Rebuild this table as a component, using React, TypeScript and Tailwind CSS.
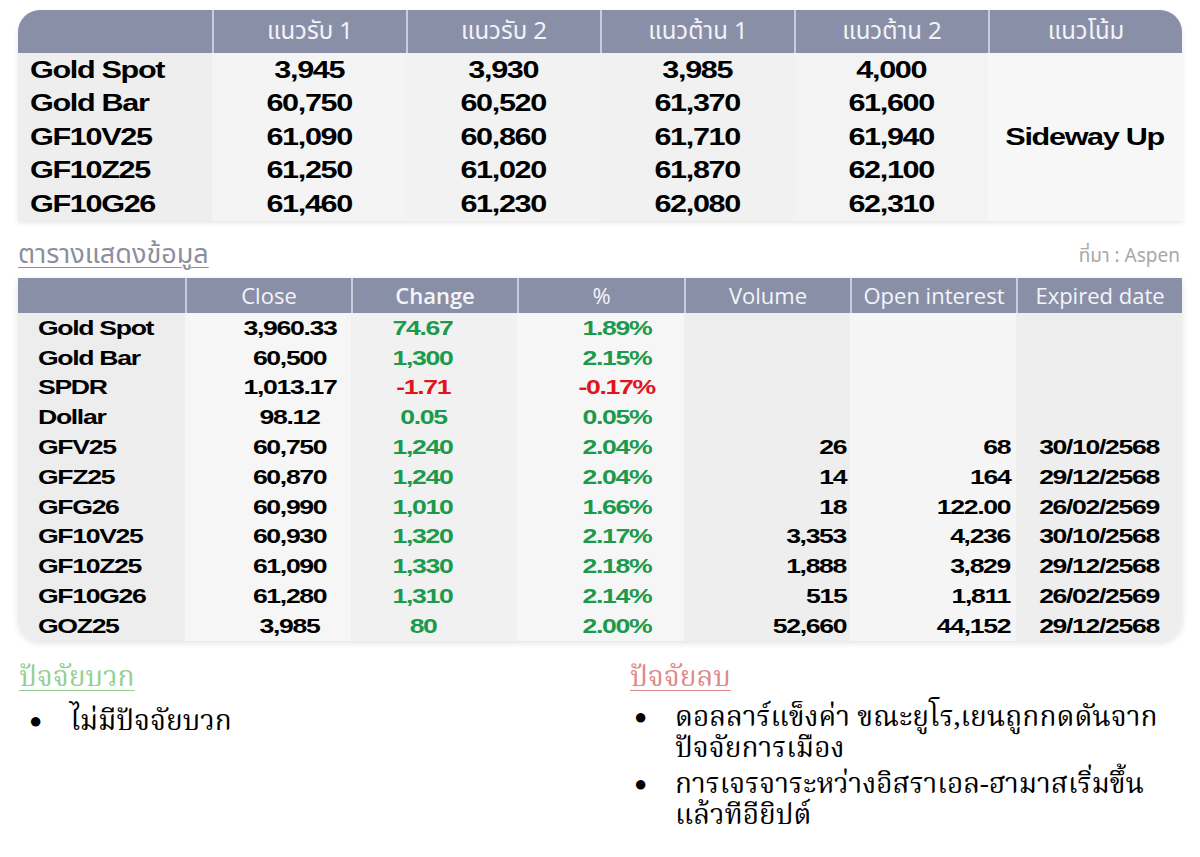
import React from "react";

const topRows: string[][] = [
  ["Gold Spot", "3,945", "3,930", "3,985", "4,000"],
  ["Gold Bar", "60,750", "60,520", "61,370", "61,600"],
  ["GF10V25", "61,090", "60,860", "61,710", "61,940"],
  ["GF10Z25", "61,250", "61,020", "61,870", "62,100"],
  ["GF10G26", "61,460", "61,230", "62,080", "62,310"],
];

type Row = { n: string; c: string; ch: string; p: string; v: string; oi: string; d: string; down?: boolean };

const rows: Row[] = [
  { n: "Gold Spot", c: "3,960.33", ch: "74.67", p: "1.89%", v: "", oi: "", d: "" },
  { n: "Gold Bar", c: "60,500", ch: "1,300", p: "2.15%", v: "", oi: "", d: "" },
  { n: "SPDR", c: "1,013.17", ch: "-1.71", p: "-0.17%", v: "", oi: "", d: "", down: true },
  { n: "Dollar", c: "98.12", ch: "0.05", p: "0.05%", v: "", oi: "", d: "" },
  { n: "GFV25", c: "60,750", ch: "1,240", p: "2.04%", v: "26", oi: "68", d: "30/10/2568" },
  { n: "GFZ25", c: "60,870", ch: "1,240", p: "2.04%", v: "14", oi: "164", d: "29/12/2568" },
  { n: "GFG26", c: "60,990", ch: "1,010", p: "1.66%", v: "18", oi: "122.00", d: "26/02/2569" },
  { n: "GF10V25", c: "60,930", ch: "1,320", p: "2.17%", v: "3,353", oi: "4,236", d: "30/10/2568" },
  { n: "GF10Z25", c: "61,090", ch: "1,330", p: "2.18%", v: "1,888", oi: "3,829", d: "29/12/2568" },
  { n: "GF10G26", c: "61,280", ch: "1,310", p: "2.14%", v: "515", oi: "1,811", d: "26/02/2569" },
  { n: "GOZ25", c: "3,985", ch: "80", p: "2.00%", v: "52,660", oi: "44,152", d: "29/12/2568" },
];

const thai = "font-['Tahoma','Noto_Sans_Thai','Noto_Serif_Thai','Garuda','Loma','Norasi',sans-serif]";
const thaiSerif = "font-['Noto_Serif_Thai','Norasi','Tlwg_Typo','Noto_Sans_Thai','Garuda',serif]";

function SqL({ t }: { t: string }) {
  return <span className="inline-block origin-left scale-x-[1.33] tracking-[-1px] whitespace-nowrap">{t}</span>;
}
function SqC({ t }: { t: string }) {
  return <span className="inline-block origin-center scale-x-[1.33] tracking-[-1px] whitespace-nowrap">{t}</span>;
}
function SqR({ t }: { t: string }) {
  return <span className="inline-block origin-right scale-x-[1.33] tracking-[-1px] whitespace-nowrap">{t}</span>;
}

const topBg = ["bg-[#eeeeee]", "bg-[#f4f4f4]", "bg-[#f2f2f2]", "bg-[#f1f1f1]", "bg-[#f3f3f3]"];

export default function App() {
  return (
    <div className="w-[1200px] h-[857px] bg-white overflow-hidden text-black">
      <div className="pl-[18px] pt-[10px] w-[1182px]">
        {/* Top table */}
        <div className="grid grid-cols-[repeat(6,194px)] grid-rows-[43px_repeat(5,33.6px)] rounded-t-[22px] overflow-hidden shadow-[0_2px_5px_rgba(0,0,0,0.10)] font-['Liberation_Sans',Arial,sans-serif] font-bold text-[23px]">
          <div className="bg-[#8a8fa8]" />
          {["แนวรับ 1", "แนวรับ 2", "แนวต้าน 1", "แนวต้าน 2", "แนวโน้ม"].map((h) => (
            <div key={h} className={`bg-[#8a8fa8] border-l-2 border-[#c9ccda] flex items-center justify-center text-[24px] font-normal text-[#f2f3f8] ${thai}`}>
              {h}
            </div>
          ))}
          {topRows.map((r, ri) => (
            <React.Fragment key={ri}>
              <div className={`${topBg[0]} flex items-center pl-[12px]`}>
                <SqL t={r[0]} />
              </div>
              {r.slice(1).map((v, ci) => (
                <div key={ci} className={`${topBg[ci + 1]} flex items-center justify-center`}>
                  <SqC t={v} />
                </div>
              ))}
              {ri === 0 && (
                <div className="row-span-5 bg-[#f7f7f7] flex items-center justify-center">
                  <SqC t="Sideway Up" />
                </div>
              )}
            </React.Fragment>
          ))}
        </div>

        {/* Title */}
        <div className="flex justify-between items-end h-[57px] pb-[6px]">
          <div className={`text-[27px] leading-[34px] text-[#8d8f9e] underline underline-offset-[4px] decoration-[1px] ${thai}`}>
            ตารางแสดงข้อมูล
          </div>
          <div className={`text-[19px] text-[#a8a8a8] pr-[2px] pb-[0px] ${thai}`}>ที่มา : Aspen</div>
        </div>

        {/* Second table */}
        <div className="grid grid-cols-[167px_166px_166px_167px_166px_166px_166px] grid-rows-[35px_repeat(11,29.8px)] rounded-b-[22px] overflow-hidden shadow-[0_2px_6px_rgba(0,0,0,0.12)] font-['Liberation_Sans',Arial,sans-serif] font-bold text-[20px]">
          <div className="bg-[#8a8fa8]" />
          {[
            { t: "Close", b: false },
            { t: "Change", b: true },
            { t: "%", b: false },
            { t: "Volume", b: false },
            { t: "Open interest", b: false },
            { t: "Expired date", b: false },
          ].map((h) => (
            <div
              key={h.t}
              className={`bg-[#8a8fa8] border-l-2 border-[#c9ccda] flex items-center justify-center whitespace-nowrap text-[22px] text-[#f4f5fa] font-['Open_Sans','Noto_Sans',sans-serif] ${h.b ? "font-semibold" : "font-normal"}`}
            >
              {h.t}
            </div>
          ))}
          {rows.map((r, i) => (
            <React.Fragment key={i}>
              <div className="bg-[#ededed] flex items-center pl-[20px]">
                <SqL t={r.n} />
              </div>
              <div className="bg-[#f6f6f6] flex items-center justify-center pl-[44px]">
                <SqC t={r.c} />
              </div>
              <div className={`bg-[#f1f1f1] flex items-center justify-center pr-[22px] ${r.down ? "text-[#e3131b]" : "text-[#1c9a4c]"}`}>
                <SqC t={r.ch} />
              </div>
              <div className={`bg-[#f6f6f6] flex items-center justify-center pl-[32px] ${r.down ? "text-[#e3131b]" : "text-[#1c9a4c]"}`}>
                <SqC t={r.p} />
              </div>
              <div className="bg-[#eeeeee] flex items-center justify-end pr-[4px]">
                <SqR t={r.v} />
              </div>
              <div className="bg-[#f5f5f5] flex items-center justify-end pr-[6px]">
                <SqR t={r.oi} />
              </div>
              <div className="bg-[#eeeeee] flex items-center justify-center">
                <SqC t={r.d} />
              </div>
            </React.Fragment>
          ))}
        </div>
      </div>

      {/* Factors */}
      <div className={`grid grid-cols-[611px_1fr] pl-[19px] pt-[20px] ${thaiSerif}`}>
        <div>
          <div className="text-[28px] leading-[36px] text-[#93cf93] underline underline-offset-[4px] decoration-[1px] inline-block">
            ปัจจัยบวก
          </div>
          <ul className="mt-[10px] text-[28px] leading-[31px]">
            <li className="flex items-start">
              <span className="w-[51px] pl-[10px] text-[22px] leading-[31px]">●</span>
              <span>ไม่มีปัจจัยบวก</span>
            </li>
          </ul>
        </div>
        <div>
          <div className="text-[28px] leading-[36px] text-[#dc8a8a] underline underline-offset-[4px] decoration-[1px] inline-block">
            ปัจจัยลบ
          </div>
          <ul className="mt-[6px] text-[28px] leading-[31px]">
            <li className="flex items-start">
              <span className="w-[45px] pl-[4px] text-[22px] leading-[31px] shrink-0">●</span>
              <span className="w-[500px]">
                ดอลลาร์แข็งค่า ขณะยูโร,เยนถูกกดดันจาก
                <br />
                ปัจจัยการเมือง
              </span>
            </li>
            <li className="flex items-start mt-[5px]">
              <span className="w-[45px] pl-[4px] text-[22px] leading-[31px] shrink-0">●</span>
              <span className="w-[500px]">
                การเจรจาระหว่างอิสราเอล-ฮามาสเริ่มขึ้น
                <br />
                แล้วทีอียิปต์
              </span>
            </li>
          </ul>
        </div>
      </div>
    </div>
  );
}
